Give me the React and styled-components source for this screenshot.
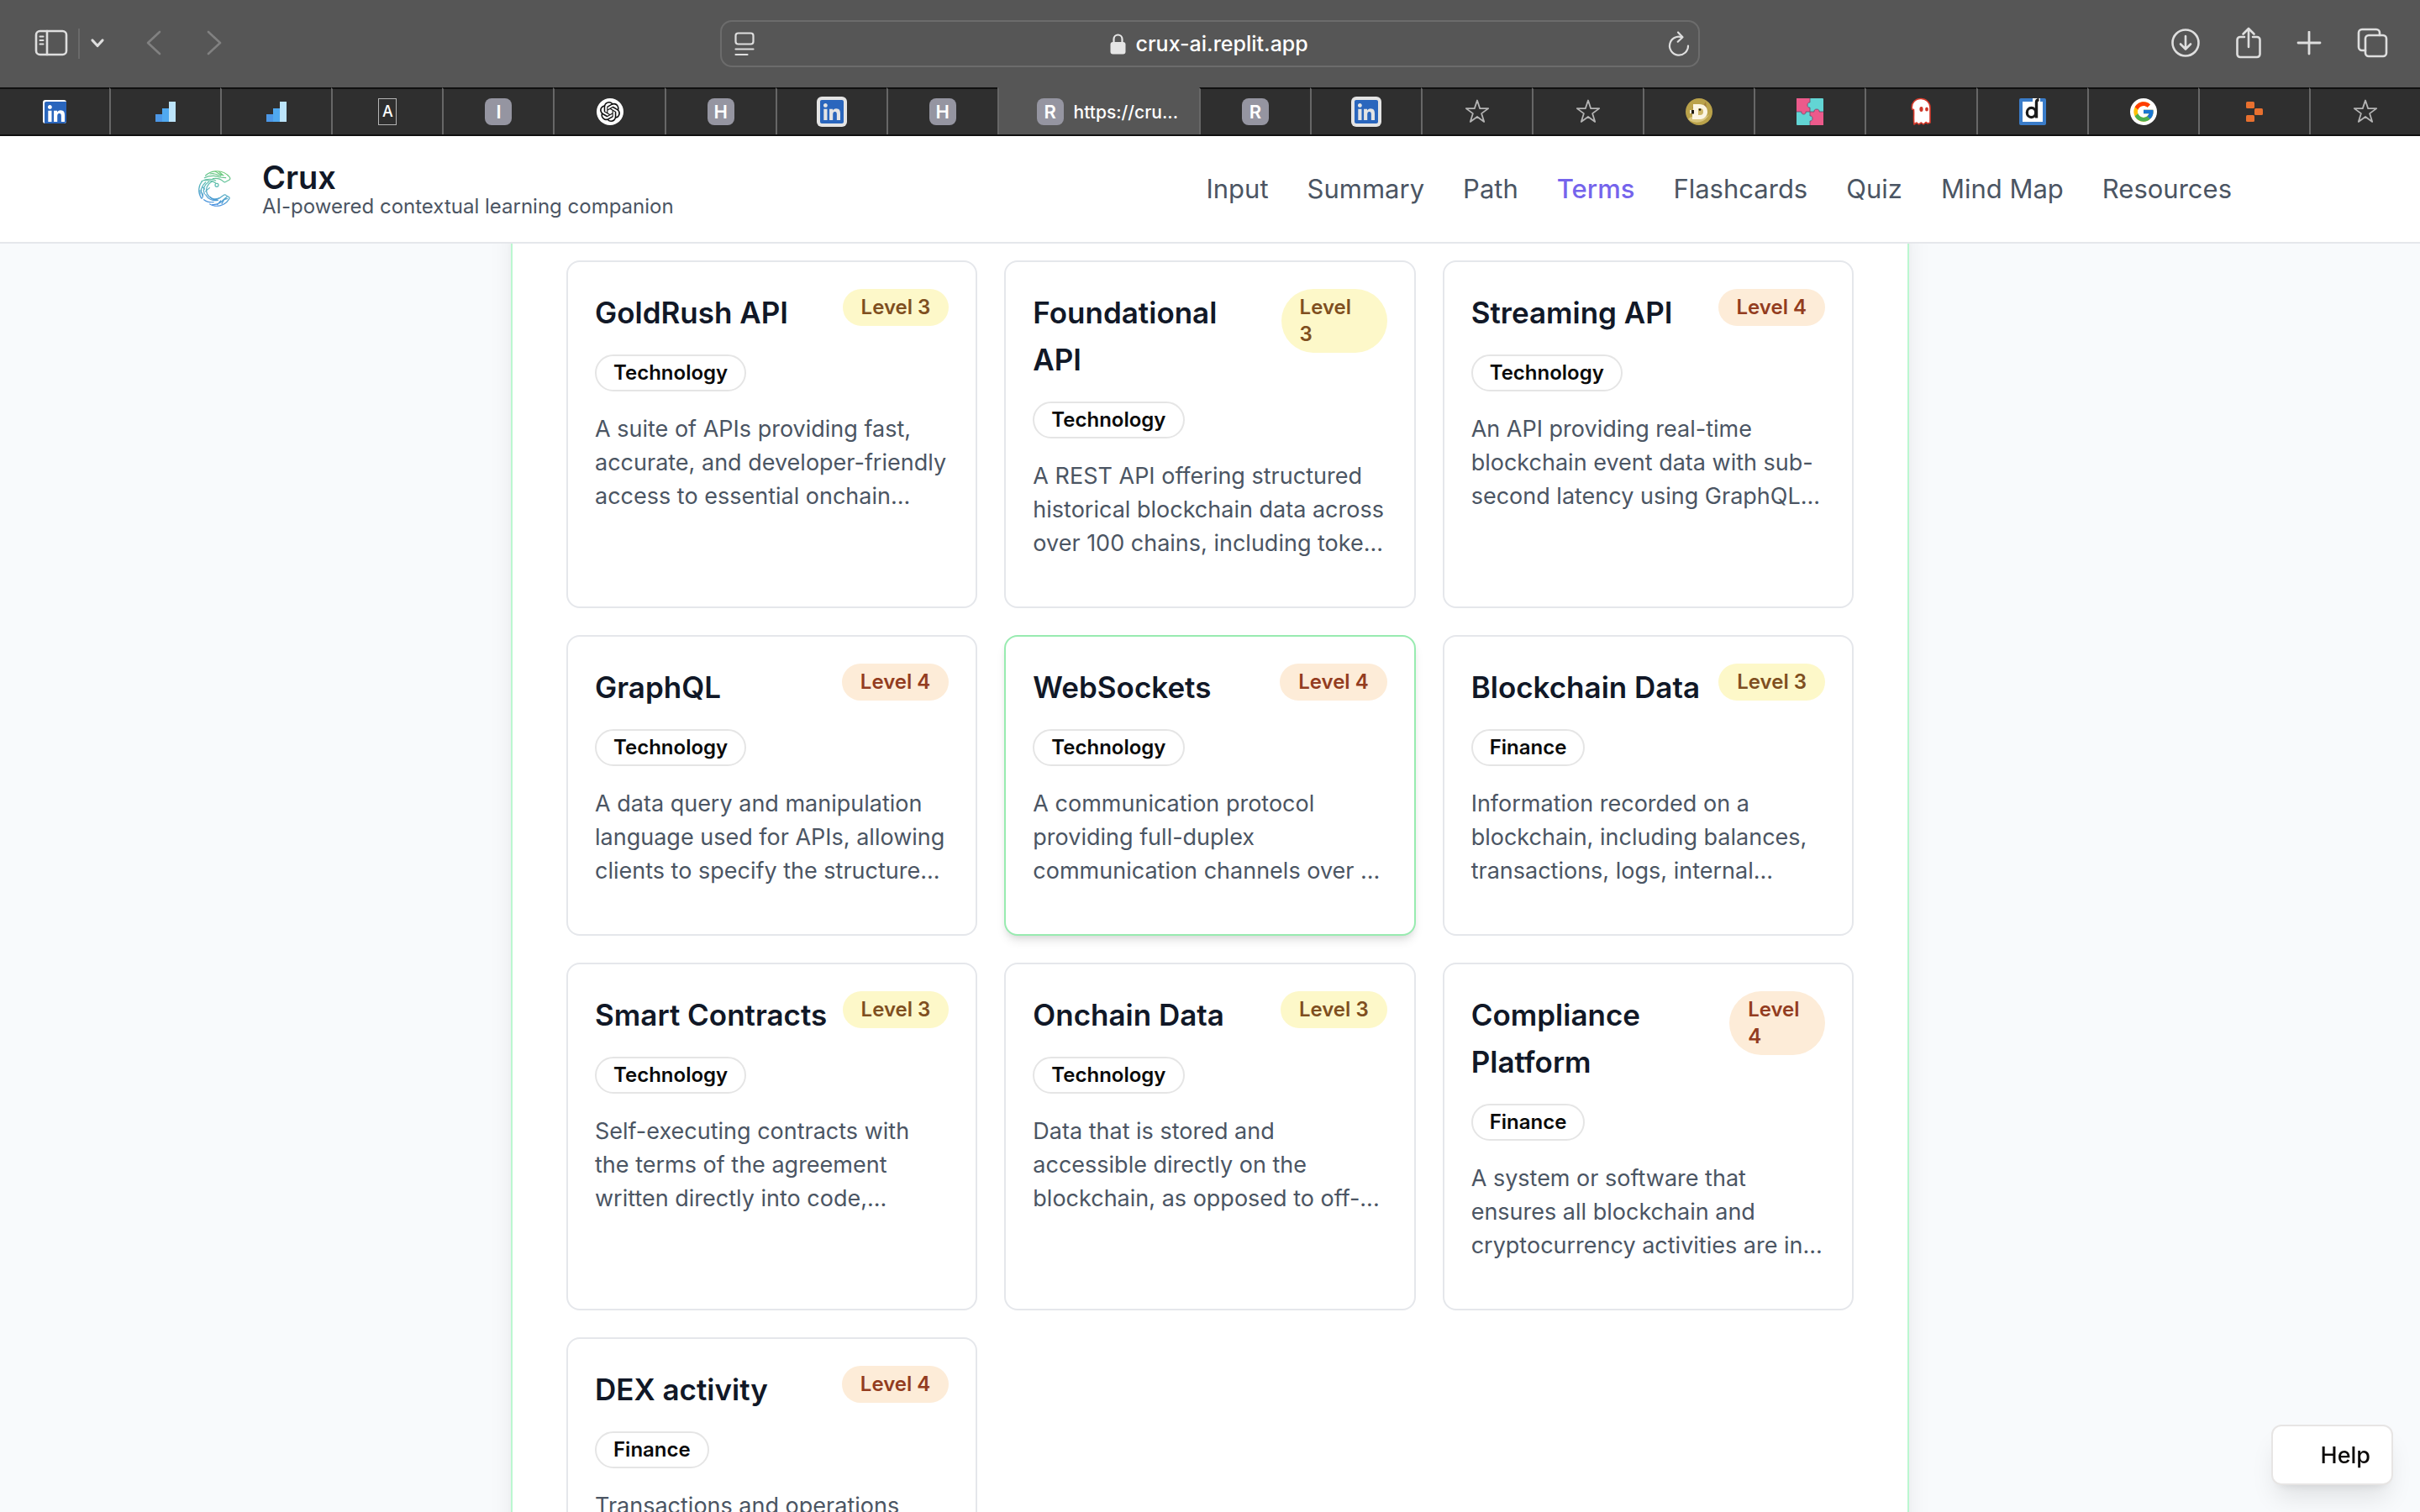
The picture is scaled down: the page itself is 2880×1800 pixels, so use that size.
import React from "react";
import styled, { createGlobalStyle, css } from "styled-components";
import { FaLinkedin } from "react-icons/fa";
import { FcGoogle } from "react-icons/fc";
import { SiOpenai } from "react-icons/si";

const GlobalStyle = createGlobalStyle`
  *, *::before, *::after { box-sizing: border-box; }
  html, body { margin: 0; padding: 0; }
  body {
    font-family: Inter, "Liberation Sans", sans-serif;
    background: #f8fafc;
    color: #111827;
  }
  button, input { font: inherit; color: inherit; }
  h1, h2, p, ul { margin: 0; padding: 0; }
`;

const Window = styled.div`
  display: flex;
  flex-direction: column;
  height: 100vh;
  overflow: hidden;
`;

/* ---------- browser toolbar ---------- */

const Toolbar = styled.div`
  display: grid;
  grid-template-columns: 1fr minmax(0, 1166px) 1fr;
  align-items: center;
  height: 104px;
  flex: none;
  padding: 0 38px;
  background: #565656;
  color: #dedede;
`;

const ToolGroup = styled.div`
  display: flex;
  align-items: center;
  justify-content: ${(p) => (p.$end ? "flex-end" : "flex-start")};
  gap: ${(p) => p.$gap}px;
  padding-left: ${(p) => (p.$inset ? 3 : 0)}px;
`;

const IconButton = styled.button`
  display: flex;
  align-items: center;
  justify-content: center;
  padding: 0;
  border: 0;
  background: none;
  color: ${(p) => (p.$dim ? "#818181" : "inherit")};
  svg { display: block; }
`;

const ToolDivider = styled.span`
  width: 2px;
  height: 36px;
  background: #6a6a6a;
`;

const AddressBar = styled.div`
  display: flex;
  align-items: center;
  height: 56px;
  padding: 0 10px 0 14px;
  border: 2px solid #6c6c6c;
  border-radius: 14px;
`;

const Address = styled.label`
  flex: 1;
  display: flex;
  align-items: center;
  justify-content: center;
  gap: 12px;
`;

const AddressInput = styled.input`
  width: 212px;
  field-sizing: content;
  padding: 0;
  border: 0;
  outline: 0;
  background: none;
  color: #ffffff;
  font-size: 25px;
  font-weight: 500;
  line-height: 32px;
`;

/* ---------- browser tabs ---------- */

const TabStrip = styled.div`
  display: flex;
  height: 58px;
  flex: none;
  background: #2f2f2f;
  border-bottom: 2px solid #101010;
`;

const Tab = styled.button`
  flex: 1;
  min-width: 0;
  display: flex;
  align-items: center;
  justify-content: center;
  gap: 12px;
  padding: 0;
  border: 0;
  border-top: 2px solid #101010;
  border-left: 2px solid #676767;
  background: none;
  color: #ffffff;
  font-size: 21px;
  font-weight: 500;
  &:first-child { border-left: 0; }
  ${(p) =>
    p.$active &&
    css`
      flex: none;
      width: 240px;
      padding-left: 20px;
      border-top-color: #565656;
      background: #565656;
    `}
`;

const LetterIcon = styled.span`
  display: grid;
  place-items: center;
  width: 32px;
  height: 32px;
  border-radius: 8px;
  background: #9595a1;
  color: #ffffff;
  font-size: 22px;
  font-weight: 600;
  line-height: 32px;
`;

const FrameIcon = styled(LetterIcon)`
  width: 22px;
  border: 1px solid #b5b5b5;
  border-radius: 0;
  background: none;
  font-size: 18px;
  font-weight: 500;
  line-height: 30px;
`;

const LinkedInIcon = styled.span`
  display: grid;
  place-items: center;
  width: ${(p) => (p.$framed ? 36 : 28)}px;
  height: ${(p) => (p.$framed ? 36 : 28)}px;
  border-radius: ${(p) => (p.$framed ? 6 : 3)}px;
  background: ${(p) => (p.$framed ? "#e4e4e4" : "#ffffff")};
  color: #2a66bd;
  overflow: hidden;
  svg { display: block; }
`;

const RoundIcon = styled.span`
  display: grid;
  place-items: center;
  width: 32px;
  height: 32px;
  border-radius: 50%;
  background: #ffffff;
  color: #111111;
`;

/* ---------- site header ---------- */

const SiteHeader = styled.header`
  flex: none;
  height: 128px;
  background: #ffffff;
  border-bottom: 2px solid #e5e7eb;
`;

const HeaderInner = styled.div`
  display: flex;
  align-items: center;
  justify-content: space-between;
  max-width: 2560px;
  height: 100%;
  margin: 0 auto;
  padding: 0 64px;
`;

const Brand = styled.div`
  display: flex;
  align-items: center;
  gap: 24px;
  svg { display: block; }
`;

const BrandText = styled.div`
  padding-top: 8px;
`;

const BrandName = styled.h1`
  font-size: 38px;
  font-weight: 600;
  line-height: 34px;
`;

const Tagline = styled.p`
  color: #4b5563;
  font-size: 24px;
  line-height: 36px;
`;

const Nav = styled.nav`
  display: flex;
  gap: 46px;
`;

const NavLink = styled.a`
  color: ${(p) => (p.$active ? "#7564ec" : "#4b5563")};
  font-size: 31px;
  font-weight: ${(p) => (p.$active ? 500 : 400)};
  line-height: 48px;
  text-decoration: none;
`;

/* ---------- terms ---------- */

const Content = styled.main`
  flex: 1;
  min-height: 0;
  overflow: hidden;
  padding: 0 32px;
`;

const Panel = styled.section`
  max-width: 1664px;
  margin: -48px auto 0;
  padding: 68px 64px 64px;
  border: 2px solid #bbf7d0;
  border-top: 0;
  background: #ffffff;
  box-shadow: 0 20px 30px -6px rgba(0, 0, 0, 0.1), 0 8px 12px -8px rgba(0, 0, 0, 0.1);
`;

const Grid = styled.div`
  display: grid;
  grid-template-columns: repeat(3, minmax(0, 1fr));
  gap: 32px;
`;

const Card = styled.article`
  padding: 32px 32px 55px;
  border: 2px solid ${(p) => (p.$hovered ? "#98ebb0" : "#e5e7eb")};
  border-radius: 16px;
  background: #ffffff;
  box-shadow: ${(p) =>
    p.$hovered
      ? "0 8px 12px -2px rgba(0, 0, 0, 0.1), 0 4px 8px -4px rgba(0, 0, 0, 0.1)"
      : "none"};
`;

const CardHead = styled.div`
  display: flex;
  align-items: flex-start;
  justify-content: space-between;
  margin-bottom: 22px;
`;

const Term = styled.h2`
  font-size: 35px;
  font-weight: 600;
  line-height: 56px;
`;

const Badge = styled.span`
  display: inline-block;
  padding: 4px 20px;
  border: 2px solid transparent;
  border-radius: 42px;
  font-size: 24px;
  font-weight: 600;
  line-height: 32px;
`;

const LevelBadge = styled(Badge)`
  margin-left: 12px;
  ${(p) =>
    p.$level === 3
      ? css`
          background: #fdf8c9;
          color: #7f4f1f;
        `
      : css`
          background: #fdecd8;
          color: #933c20;
        `}
`;

const TopicBadge = styled(Badge)`
  display: block;
  width: fit-content;
  border-color: #e5e5e5;
  color: #0a0a0a;
`;

const Definition = styled.p`
  margin-top: 25px;
  color: #4b5563;
  font-size: 27px;
  line-height: 40px;
  white-space: pre;
`;

const HelpButton = styled.button`
  position: fixed;
  right: 32px;
  bottom: 32px;
  height: 72px;
  padding: 0 25px 0 57px;
  border: 2px solid #e7e5e4;
  border-radius: 12px;
  background: #ffffff;
  color: #0c0a09;
  font-size: 27px;
  font-weight: 500;
  box-shadow: 0 20px 30px -6px rgba(0, 0, 0, 0.1), 0 8px 12px -8px rgba(0, 0, 0, 0.1);
`;

/* ---------- drawings ---------- */

const Line = ({ w, h, sw = 2.6, children }) => (
  <svg width={w} height={h} viewBox={`0 0 ${w} ${h}`} fill="none" stroke="currentColor" strokeWidth={sw} strokeLinecap="round" strokeLinejoin="round" aria-hidden="true">
    {children}
  </svg>
);

const SidebarIcon = () => (
  <Line w={40} h={34}>
    <rect x="2" y="2" width="36" height="28" rx="4.5" />
    <path d="M15 2v28" />
    <path d="M6.5 8.5h4M6.5 13h4M6.5 17.5h4" strokeWidth="2" />
  </Line>
);
const DownIcon = () => (
  <Line w={18} h={14} sw={3.2}>
    <path d="M3 3l6 6.500L15 3" />
  </Line>
);
const BackIcon = () => (
  <Line w={20} h={32}>
    <path d="M17 2L3 15l14 13" />
  </Line>
);
const ForwardIcon = () => (
  <Line w={20} h={32}>
    <path d="M3 2l14 13L3 28" />
  </Line>
);
const ReaderIcon = () => (
  <Line w={26} h={30} sw={2.2}>
    <rect x="2.5" y="2.5" width="21" height="13" rx="3" />
    <path d="M2.5 21.5h21M2.5 28h14" />
  </Line>
);
const LockIcon = () => (
  <svg width="19" height="26" viewBox="0 0 19 26" aria-hidden="true">
    <path d="M4.5 12V7.5a5 5 0 0 1 10 0V12" fill="none" stroke="#e6e6e6" strokeWidth="2.2" />
    <rect x="0.5" y="11" width="18" height="14.5" rx="3" fill="#e6e6e6" />
  </svg>
);
const ReloadIcon = () => (
  <Line w={26} h={32} sw={2.2}>
    <path d="M16.5 8.2A11 11 0 1 0 24 18.5" />
    <path d="M12 2.5l5.5 5.8-5.8 5.4" />
  </Line>
);
const DownloadIcon = () => (
  <Line w={36} h={36}>
    <circle cx="18" cy="17" r="15.500" />
    <path d="M18 9v15M12 18.500l6 6 6-6" />
  </Line>
);
const ShareIcon = () => (
  <Line w={32} h={40}>
    <path d="M11 12H6a3.500 3.500 0 0 0-3.500 3.500v17A3.500 3.500 0 0 0 6 36h20a3.500 3.500 0 0 0 3.500-3.500v-17A3.500 3.500 0 0 0 26 12h-5" />
    <path d="M16 24V2.500M9.500 8.500L16 2l6.500 6.500" />
  </Line>
);
const PlusIcon = () => (
  <Line w={30} h={30} sw={2.8}>
    <path d="M15 1v26M2 14h26" />
  </Line>
);
const TabsIcon = () => (
  <Line w={38} h={38}>
    <rect x="11" y="9" width="25" height="25" rx="4" />
    <path d="M11 27H7a4 4 0 0 1-4-4V6a4 4 0 0 1 4-4h17a4 4 0 0 1 4 4v3" />
  </Line>
);

const BarsFavicon = () => (
  <svg width="24" height="24" viewBox="0 0 24 24" aria-hidden="true">
    <rect x="0" y="15" width="8" height="9" fill="#4c97e6" />
    <rect x="8" y="8" width="8" height="16" fill="#50a9ef" />
    <rect x="16" y="0" width="8" height="24" fill="#bce4fa" />
  </svg>
);
const StarFavicon = () => (
  <svg width="30" height="30" viewBox="0 0 30 30" fill="none" stroke="#b4b4b4" strokeWidth="1.8" strokeLinejoin="round" aria-hidden="true">
    <path d="M15 1.500l3.200 9.600h10l-8.100 6 3.100 9.800-8.200-6-8.200 6 3.100-9.800-8.100-6h10z" />
  </svg>
);
const CoinFavicon = () => (
  <svg width="32" height="32" viewBox="0 0 32 32" aria-hidden="true">
    <circle cx="16" cy="16" r="16" fill="#baa24a" />
    <path d="M3 25c4-5 8-3 13-2 5 1 9-1 12-4a16 16 0 0 1-25 6z" fill="#d9c67e" />
    <path d="M8 12l2-5 4 3 7-1 3-5 1 8z" fill="#a5803c" />
    <path d="M9 7h7c7 0 10 4 10 9.200S22 25 16 25H8v-7H5v-4h4z" fill="#fbf5e2" />
    <path d="M15 12h2c3 0 4 1.500 4 4s-1 4-4 4h-2z" fill="#cdb665" />
    <path d="M7 14h3v4.500H7z" fill="#1f1a12" />
    <circle cx="17" cy="13.500" r="1.300" fill="#1f1a12" />
  </svg>
);
const PuzzleFavicon = () => (
  <svg width="32" height="32" viewBox="0 0 32 32" aria-hidden="true">
    <rect width="32" height="32" rx="1" fill="#62d5d4" />
    <path d="M0 0h16v5c-4-1-4 7 0 6v5h-5c1 4-6 4-5 0H0z" fill="#ec5a8b" />
    <path d="M16 32v-5c4 1 4-7 0-6v-5h5c-1-4 7-4 6 0h5v16z" fill="#ec5a8b" />
    <path d="M16 0v5c-4-1-4 7 0 6v10c4-1 4 7 0 6v5M0 16h6c-1 4 6 4 5 0h10c-1-4 7-4 6 0h5" fill="none" stroke="#6b4a68" strokeWidth="0.800" />
  </svg>
);
const GhostFavicon = () => (
  <svg width="24" height="34" viewBox="0 0 24 34" aria-hidden="true">
    <path d="M1.500 14C0 6 6 1.500 12 1.500S23 6 23 12v18l-3 1-2-1.500-3 2.500-2.500-2-3 2-2.500-2L4 32c-1-6 0-11-.5-17.500z" fill="#ffffff" stroke="#d83a2b" strokeWidth="1.600" strokeLinejoin="round" />
    <ellipse cx="12.500" cy="14" rx="2.100" ry="3" fill="#cf3526" />
    <ellipse cx="19" cy="14" rx="1.900" ry="2.500" fill="#cf3526" />
  </svg>
);
const BoxFavicon = () => (
  <svg width="32" height="32" viewBox="0 0 32 32" aria-hidden="true">
    <rect width="32" height="32" rx="2" fill="#3a7cc9" />
    <rect x="4" y="4" width="24" height="24" fill="#ffffff" />
    <rect x="16" y="0" width="9" height="6" fill="#ffffff" />
    <path d="M20.500 23.500V4.500q0-2.500 3-3" fill="none" stroke="#1a1a1a" strokeWidth="3.400" />
    <ellipse cx="14.500" cy="17" rx="5.200" ry="5.600" fill="none" stroke="#1a1a1a" strokeWidth="3.200" />
  </svg>
);
const BlocksFavicon = () => (
  <svg width="20" height="24" viewBox="0 0 20 24" fill="#e8702f" aria-hidden="true">
    <rect x="0" y="0" width="10" height="8" rx="1.500" />
    <rect x="10" y="8" width="10" height="8" rx="1.500" />
    <rect x="0" y="16" width="10" height="8" rx="1.500" />
  </svg>
);

const CruxLogo = () => (
  <svg width="64" height="64" viewBox="0 0 192 192" fill="none" stroke="url(#crux)" strokeWidth="3.600" strokeLinecap="round" strokeLinejoin="round" aria-hidden="true">
    <defs>
      <linearGradient id="crux" x1="120" y1="30" x2="90" y2="155" gradientUnits="userSpaceOnUse">
        <stop offset="0" stopColor="#6ccb6e" />
        <stop offset="0.450" stopColor="#5cbcb4" />
        <stop offset="1" stopColor="#4a90e2" />
      </linearGradient>
    </defs>
    <path d="M62 48C82 28 124 24 148 54q4 6-2 10l-14 7q-4 2-8-3c-10-9-22-11-36-9" />
    <path d="M58 56c18-10 44-8 54-2l22 2M78 42c18-4 28 4 38 8M96 33c14 6 16 14 30 14M110 34l12 11" />
    <path d="M48 68c20-10 38-8 50-2M56 65c22-2 34 4 42 10" />
    <circle cx="102" cy="82" r="6" />
    <path d="M50 68C36 84 34 108 46 128M62 72C46 86 42 104 52 122M74 70C56 82 52 98 58 114" />
    <path d="M86 68c-18 10-26 28-18 46 8 16 26 22 42 14M76 92l-14 12M50 88l8 8M42 100v14" />
    <path d="M48 130c6-6 6-12 2-20M56 134c10 8 20 10 34 9M62 116c8 16 26 24 44 20" />
    <path d="M110 130l18-13q4-2 8 2l10 6q3 3-1 8c-16 24-46 30-68 17" />
    <path d="M86 152c20 0 32-8 40-18l12-10M104 152l12-14M120 148l8-14 12-4M78 124c8 10 18 12 28 8" />
  </svg>
);

/* ---------- data ---------- */

const TABS = [
  { name: "LinkedIn", icon: <LinkedInIcon><FaLinkedin size={32} /></LinkedInIcon> },
  { name: "Stats", icon: <BarsFavicon /> },
  { name: "Stats", icon: <BarsFavicon /> },
  { name: "A", icon: <FrameIcon>A</FrameIcon> },
  { name: "I", icon: <LetterIcon>I</LetterIcon> },
  { name: "OpenAI", icon: <RoundIcon><SiOpenai size={24} /></RoundIcon> },
  { name: "H", icon: <LetterIcon>H</LetterIcon> },
  { name: "LinkedIn", icon: <LinkedInIcon $framed><FaLinkedin size={32} /></LinkedInIcon> },
  { name: "H", icon: <LetterIcon>H</LetterIcon> },
  { name: "Crux", icon: <LetterIcon>R</LetterIcon>, title: "https://cru...", active: true },
  { name: "R", icon: <LetterIcon>R</LetterIcon> },
  { name: "LinkedIn", icon: <LinkedInIcon $framed><FaLinkedin size={32} /></LinkedInIcon> },
  { name: "Favourites", icon: <StarFavicon /> },
  { name: "Favourites", icon: <StarFavicon /> },
  { name: "Coin", icon: <CoinFavicon /> },
  { name: "Puzzle", icon: <PuzzleFavicon /> },
  { name: "Ghost", icon: <GhostFavicon /> },
  { name: "Documents", icon: <BoxFavicon /> },
  { name: "Google", icon: <RoundIcon><FcGoogle size={28} /></RoundIcon> },
  { name: "Replit", icon: <BlocksFavicon /> },
  { name: "Favourites", icon: <StarFavicon /> },
];

const LINKS = ["Input", "Summary", "Path", "Terms", "Flashcards", "Quiz", "Mind Map", "Resources"];

const TERMS = [
  { term: "GoldRush API", level: 3, topic: "Technology", lines: ["A suite of APIs providing fast,", "accurate, and developer-friendly", "access to essential onchain..."] },
  { term: "Foundational API", level: 3, topic: "Technology", lines: ["A REST API offering structured", "historical blockchain data across", "over 100 chains, including toke..."] },
  { term: "Streaming API", level: 4, topic: "Technology", lines: ["An API providing real-time", "blockchain event data with sub-", "second latency using GraphQL..."] },
  { term: "GraphQL", level: 4, topic: "Technology", lines: ["A data query and manipulation", "language used for APIs, allowing", "clients to specify the structure..."] },
  { term: "WebSockets", level: 4, topic: "Technology", hovered: true, lines: ["A communication protocol", "providing full-duplex", "communication channels over ..."] },
  { term: "Blockchain Data", level: 3, topic: "Finance", lines: ["Information recorded on a", "blockchain, including balances,", "transactions, logs, internal..."] },
  { term: "Smart Contracts", level: 3, topic: "Technology", lines: ["Self-executing contracts with", "the terms of the agreement", "written directly into code,..."] },
  { term: "Onchain Data", level: 3, topic: "Technology", lines: ["Data that is stored and", "accessible directly on the", "blockchain, as opposed to off-..."] },
  { term: "Compliance Platform", level: 4, topic: "Finance", lines: ["A system or software that", "ensures all blockchain and", "cryptocurrency activities are in..."] },
  { term: "DEX activity", level: 4, topic: "Finance", lines: ["Transactions and operations"] },
];

const TermCard = ({ term, level, topic, lines, hovered }) => (
  <Card $hovered={hovered}>
    <CardHead>
      <Term>{term}</Term>
      <LevelBadge $level={level}>Level {level}</LevelBadge>
    </CardHead>
    <TopicBadge>{topic}</TopicBadge>
    <Definition>{lines.join("\n")}</Definition>
  </Card>
);

export default function App() {
  return (
    <Window>
      <GlobalStyle />
      <Toolbar>
        <ToolGroup $gap={48} $inset>
          <ToolGroup $gap={12}>
            <IconButton aria-label="Sidebar"><SidebarIcon /></IconButton>
            <ToolDivider />
            <IconButton aria-label="Tab groups"><DownIcon /></IconButton>
          </ToolGroup>
          <ToolGroup $gap={52}>
            <IconButton $dim aria-label="Back"><BackIcon /></IconButton>
            <IconButton $dim aria-label="Forward"><ForwardIcon /></IconButton>
          </ToolGroup>
        </ToolGroup>
        <AddressBar>
          <IconButton aria-label="Reader"><ReaderIcon /></IconButton>
          <Address>
            <LockIcon />
            <AddressInput aria-label="Address" defaultValue="crux-ai.replit.app" />
          </Address>
          <IconButton aria-label="Reload"><ReloadIcon /></IconButton>
        </AddressBar>
        <ToolGroup $end $gap={41}>
          <IconButton aria-label="Downloads"><DownloadIcon /></IconButton>
          <IconButton aria-label="Share"><ShareIcon /></IconButton>
          <IconButton aria-label="New tab"><PlusIcon /></IconButton>
          <IconButton aria-label="Tab overview"><TabsIcon /></IconButton>
        </ToolGroup>
      </Toolbar>
      <TabStrip>
        {TABS.map((tab, i) => (
          <Tab key={i} $active={tab.active} aria-label={tab.name}>
            {tab.icon}
            {tab.title}
          </Tab>
        ))}
      </TabStrip>
      <SiteHeader>
        <HeaderInner>
          <Brand>
            <CruxLogo />
            <BrandText>
              <BrandName>Crux</BrandName>
              <Tagline>AI-powered contextual learning companion</Tagline>
            </BrandText>
          </Brand>
          <Nav>
            {LINKS.map((link) => (
              <NavLink key={link} href="#" $active={link === "Terms"}>{link}</NavLink>
            ))}
          </Nav>
        </HeaderInner>
      </SiteHeader>
      <Content>
        <Panel>
          <Grid>
            {TERMS.map((t) => (
              <TermCard key={t.term} {...t} />
            ))}
          </Grid>
        </Panel>
      </Content>
      <HelpButton>Help</HelpButton>
    </Window>
  );
}
